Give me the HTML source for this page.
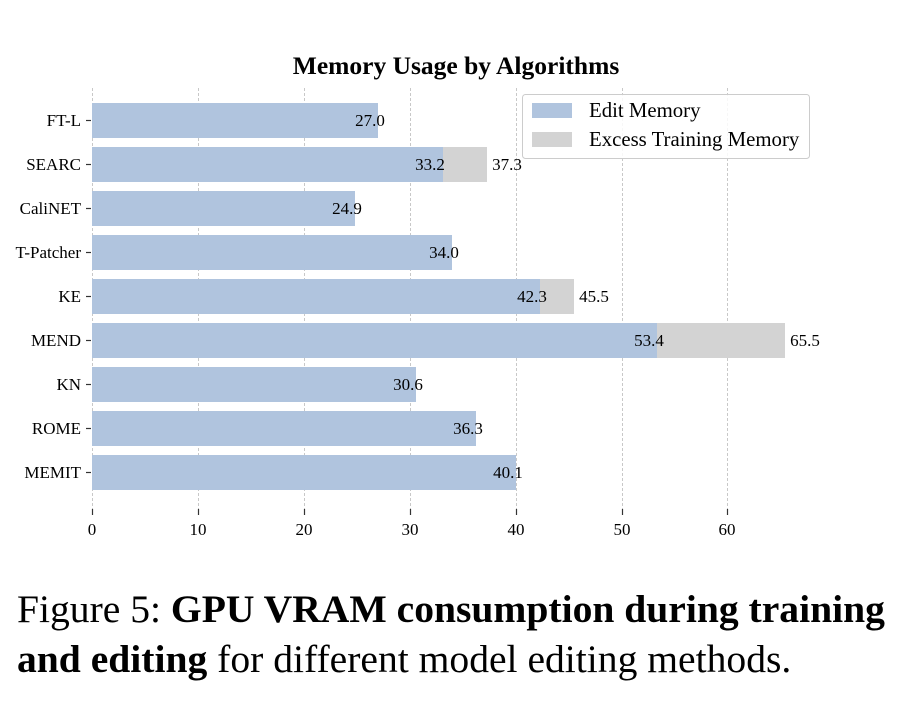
<!DOCTYPE html>
<html><head><style>
body{margin:0;background:#fff;width:921px;height:703px;overflow:hidden}
svg{position:absolute;left:0;top:0}
.cap{position:absolute;left:17px;top:584px;font-family:"Liberation Serif",serif;font-size:39.6px;line-height:50px;color:#000;white-space:nowrap}
</style></head><body>
<svg width="921" height="560" font-family="Liberation Serif, serif">
<text x="456" y="74" font-size="25.5" font-weight="bold" text-anchor="middle">Memory Usage by Algorithms</text>
<g stroke="#c8c8c8" stroke-width="1" stroke-dasharray="3,2">
<line x1="92.5" y1="88" x2="92.5" y2="512"/>
<line x1="198.5" y1="88" x2="198.5" y2="512"/>
<line x1="304.5" y1="88" x2="304.5" y2="512"/>
<line x1="410.5" y1="88" x2="410.5" y2="512"/>
<line x1="516.5" y1="88" x2="516.5" y2="512"/>
<line x1="622.5" y1="88" x2="622.5" y2="512"/>
<line x1="727.5" y1="88" x2="727.5" y2="512"/>
</g>
<g fill="#d3d3d3">
<rect x="92" y="147" width="395" height="35"/>
<rect x="92" y="279" width="482" height="35"/>
<rect x="92" y="323" width="693" height="35"/>
</g>
<g fill="#b0c4de">
<rect x="92" y="103" width="286" height="35"/>
<rect x="92" y="147" width="351" height="35"/>
<rect x="92" y="191" width="263" height="35"/>
<rect x="92" y="235" width="360" height="35"/>
<rect x="92" y="279" width="448" height="35"/>
<rect x="92" y="323" width="565" height="35"/>
<rect x="92" y="367" width="324" height="35"/>
<rect x="92" y="411" width="384" height="35"/>
<rect x="92" y="455" width="424" height="35"/>
</g>
<g font-size="17" text-anchor="middle">
<text x="370" y="126">27.0</text>
<text x="430" y="170">33.2</text><text x="507" y="170">37.3</text>
<text x="347" y="214">24.9</text>
<text x="444" y="258">34.0</text>
<text x="532" y="302">42.3</text><text x="594" y="302">45.5</text>
<text x="649" y="346">53.4</text><text x="805" y="346">65.5</text>
<text x="408" y="390">30.6</text>
<text x="468" y="434">36.3</text>
<text x="508" y="478">40.1</text>
</g>
<g font-size="17" text-anchor="end">
<text x="81" y="126">FT-L</text>
<text x="81" y="170">SEARC</text>
<text x="81" y="214">CaliNET</text>
<text x="81" y="258">T-Patcher</text>
<text x="81" y="302">KE</text>
<text x="81" y="346">MEND</text>
<text x="81" y="390">KN</text>
<text x="81" y="434">ROME</text>
<text x="81" y="478">MEMIT</text>
</g>
<g stroke="#333" stroke-width="1.2">
<line x1="86" y1="120.5" x2="91" y2="120.5"/><line x1="86" y1="164.5" x2="91" y2="164.5"/>
<line x1="86" y1="208.5" x2="91" y2="208.5"/><line x1="86" y1="252.5" x2="91" y2="252.5"/>
<line x1="86" y1="296.5" x2="91" y2="296.5"/><line x1="86" y1="340.5" x2="91" y2="340.5"/>
<line x1="86" y1="384.5" x2="91" y2="384.5"/><line x1="86" y1="428.5" x2="91" y2="428.5"/>
<line x1="86" y1="472.5" x2="91" y2="472.5"/>
<line x1="92.5" y1="509" x2="92.5" y2="515"/><line x1="198.5" y1="509" x2="198.5" y2="515"/>
<line x1="304.5" y1="509" x2="304.5" y2="515"/><line x1="410.5" y1="509" x2="410.5" y2="515"/>
<line x1="516.5" y1="509" x2="516.5" y2="515"/><line x1="622.5" y1="509" x2="622.5" y2="515"/>
<line x1="727.5" y1="509" x2="727.5" y2="515"/>
</g>
<g font-size="17" text-anchor="middle">
<text x="92" y="535">0</text><text x="198" y="535">10</text><text x="304" y="535">20</text>
<text x="410" y="535">30</text><text x="516" y="535">40</text><text x="622" y="535">50</text><text x="727" y="535">60</text>
</g>
<rect x="522.5" y="94.5" width="287" height="64" rx="3" fill="#fff" fill-opacity="0.85" stroke="#ccc"/>
<rect x="532" y="103" width="40" height="15" fill="#b0c4de"/>
<rect x="532" y="132" width="40" height="15" fill="#d3d3d3"/>
<text x="589" y="117" font-size="20.8">Edit Memory</text>
<text x="589" y="146" font-size="20.8">Excess Training Memory</text>
</svg>
<div class="cap">Figure 5: <b>GPU VRAM consumption during training</b><br><b>and editing</b> for different model editing methods.</div>
</body></html>
